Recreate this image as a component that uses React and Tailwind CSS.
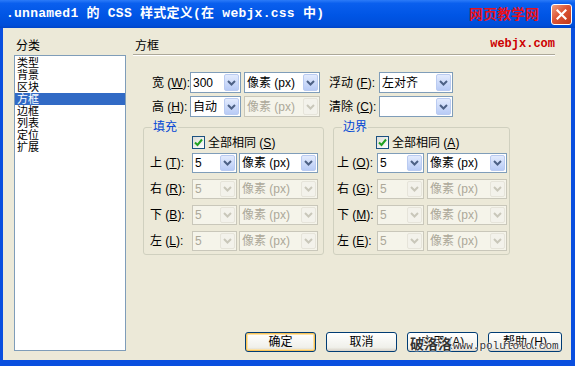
import clsx from 'clsx'

const UI = "font-['Liberation_Sans','Noto_Sans_CJK_SC',sans-serif] text-[12px] leading-[12px]"
const MONO = "font-['Liberation_Mono','Noto_Sans_CJK_SC',monospace]"
const CATEGORIES = ['类型', '背景', '区块', '方框', '边框', '列表', '定位', '扩展']

function Chevron({ disabled }) {
  return (
    <svg width="9" height="6" viewBox="0 0 9 6">
      <path d="M1 1l3.5 3.5L8 1" fill="none" stroke={disabled ? '#C9C7BA' : '#4D6185'} strokeWidth="2" />
    </svg>
  )
}

function Combo({ value, className, disabled }) {
  return (
    <div
      className={clsx(
        'flex h-full items-stretch border',
        disabled ? 'border-[#C9C7BA] bg-[#F5F4EA] text-[#ACA899]' : 'border-[#7F9DB9] bg-white text-black',
        className,
      )}
    >
      <div className="flex flex-1 items-center overflow-hidden pl-[2px] whitespace-nowrap">{value}</div>
      <div
        className={clsx(
          'm-px flex w-[15px] items-center justify-center rounded-[2px] border',
          disabled
            ? 'border-[#E6E4DA] bg-[#F3F2EB]'
            : 'border-[#BACBF1] bg-[linear-gradient(#E3EBFD,#B8CBF6)]',
        )}
      >
        <Chevron disabled={disabled} />
      </div>
    </div>
  )
}

function Label({ text, k, className }) {
  return (
    <div className={clsx('whitespace-nowrap', className)}>
      {text} (<span className="underline">{k}</span>):
    </div>
  )
}

function Check({ text, k, className }) {
  return (
    <div className={clsx('flex h-[13px] items-center', className)}>
      <div className="flex h-[13px] w-[13px] items-center justify-center border border-[#1C5180] bg-[linear-gradient(135deg,#DCDCD7,#FFFFFF)]">
        <svg width="9" height="9" viewBox="0 0 9 9">
          <path d="M1 4.5l2.5 2.5L8 1.5" fill="none" stroke="#21A121" strokeWidth="2" />
        </svg>
      </div>
      <span className="ml-[3px]">
        {text} (<span className="underline">{k}</span>)
      </span>
    </div>
  )
}

function BoxGroup({ title, check, rows, w, pad, labelW, valueW, unitW, gapW, checkPad }) {
  return (
    <fieldset className={clsx('rounded-[3px] border border-[#D0D0BF] pb-[3px]', w)}>
      <legend className="ml-[8px] px-[1px] leading-[14px] text-[#0046D5]">{title}</legend>
      <Check text="全部相同" k={check} className={clsx('mt-[2px]', checkPad)} />
      <div className="mt-[4px] flex flex-col gap-[6px]">
        {rows.map(([t, k], i) => (
          <div key={t} className={clsx('flex h-[20px] items-center', pad)}>
            <Label text={t} k={k} className={labelW} />
            <Combo value="5" className={valueW} disabled={i > 0} />
            <Combo value="像素 (px)" className={clsx(gapW, unitW)} disabled={i > 0} />
          </div>
        ))}
      </div>
    </fieldset>
  )
}

function XpButton({ children, primary, className }) {
  return (
    <div
      className={clsx(
        'flex h-[20px] items-center justify-center rounded-[3px] border border-[#003C74] bg-[linear-gradient(#FFFFFF,#F0F0EA_80%,#D6D0C5)]',
        primary && 'shadow-[inset_0_0_0_1px_#F7C35A,inset_0_0_0_2px_#FCE2A7]',
        className,
      )}
    >
      {children}
    </div>
  )
}

export default function App() {
  return (
    <div className={clsx('relative h-[366px] w-[575px] overflow-hidden bg-[#0A4FDF]', UI)}>
      <div className="flex h-[28px] items-center bg-[linear-gradient(#2C7BF8,#0A5FEE_12%,#0055E5_55%,#004ED9_90%,#0044C8)] pl-[6px] pr-[3px]">
        <div className={clsx('text-[13px] leading-[14px] font-bold tracking-[0.25px] whitespace-pre text-white', MONO)}>
          .unnamed1 的 CSS 样式定义(在 webjx.css 中)
        </div>
        <div className="ml-auto text-[14px] leading-[14px] font-bold text-[#E8121C]">网页教学网</div>
        <div className="ml-[12px] flex h-[21px] w-[21px] items-center justify-center rounded-[3px] border border-white bg-[linear-gradient(135deg,#F0A080,#DD5535_45%,#C2391A)]">
          <svg width="11" height="11" viewBox="0 0 11 11">
            <path d="M1.5 1.5l8 8M9.5 1.5l-8 8" stroke="#FFFFFF" strokeWidth="2.2" strokeLinecap="square" />
          </svg>
        </div>
      </div>

      <div className="ml-[3px] flex h-[332px] w-[568px] bg-[#ECE9D8]">
        <div className="ml-[11px] w-[112px] pt-[12px]">
          <div className="pl-[2px]">分类</div>
          <div className="mt-[3px] h-[296px] border border-[#7F9DB9] bg-white pt-[1px]">
            {CATEGORIES.map((c) => (
              <div
                key={c}
                className={clsx(
                  'h-[12px] pl-[2px] text-[11px] leading-[12px]',
                  c === '方框' ? 'bg-[#316AC5] text-white' : 'text-black',
                )}
              >
                {c}
              </div>
            ))}
          </div>
        </div>

        <div className="ml-[7px] flex w-[429px] flex-col pt-[12px]">
          <div className="flex h-[12px] w-[422px] items-start justify-between">
            <div className="pl-[2px]">方框</div>
            <div className={clsx('-mt-[2px] text-[12px] leading-[12px] font-bold text-[#CC0000]', MONO)}>webjx.com</div>
          </div>
          <div className="mt-[2px] h-[2px] w-[422px] border-t border-b border-t-[#ACA899] border-b-white" />

          <div className="mt-[16px] flex h-[21px] items-center">
            <Label text="宽" k="W" className="ml-[19px] w-[38px]" />
            <Combo value="300" className="w-[51px]" />
            <Combo value="像素 (px)" className="ml-[3px] w-[76px]" />
            <Label text="浮动" k="F" className="ml-[9px] w-[50px]" />
            <Combo value="左对齐" className="w-[74px]" />
          </div>
          <div className="mt-[3px] flex h-[21px] items-center">
            <Label text="高" k="H" className="ml-[19px] w-[38px]" />
            <Combo value="自动" className="w-[51px]" />
            <Combo value="像素 (px)" className="ml-[3px] w-[76px]" disabled />
            <Label text="清除" k="C" className="ml-[9px] w-[50px]" />
            <Combo value="" className="w-[74px]" />
          </div>

          <div className="mt-[3px] ml-[10px] flex gap-[9px]">
            <BoxGroup
              title="填充"
              check="S"
              rows={[['上', 'T'], ['右', 'R'], ['下', 'B'], ['左', 'L']]}
              w="w-[181px]"
              pad="pl-[6px]"
              labelW="w-[42px]"
              valueW="w-[45px]"
              gapW="ml-[2px]"
              unitW="w-[79px]"
              checkPad="pl-[48px]"
            />
            <BoxGroup
              title="边界"
              check="A"
              rows={[['上', 'O'], ['右', 'G'], ['下', 'M'], ['左', 'E']]}
              w="w-[177px]"
              pad="pl-[3px]"
              labelW="w-[40px]"
              valueW="w-[47px]"
              gapW="ml-[3px]"
              unitW="w-[80px]"
              checkPad="pl-[42px]"
            />
          </div>

          <div className="mt-auto mb-[8px] flex justify-end gap-[10px]">
            <XpButton primary className="w-[71px]">确定</XpButton>
            <XpButton className="w-[71px]">取消</XpButton>
            <XpButton className="w-[71px]">应用 (A)</XpButton>
            <XpButton className="w-[74px]">帮助 (H)</XpButton>
          </div>
        </div>
      </div>

      <div className="absolute top-[337px] left-[410px] flex items-end text-[#333] [text-shadow:0_0_2px_#fff,0_0_2px_#fff,0_0_1px_#fff]">
        <span className="text-[14px] leading-[15px] font-bold">破洛洛</span>
        <span className={clsx('ml-[1px] text-[11px] leading-[12px]', MONO)}>www.polulolo.com</span>
      </div>
    </div>
  )
}
